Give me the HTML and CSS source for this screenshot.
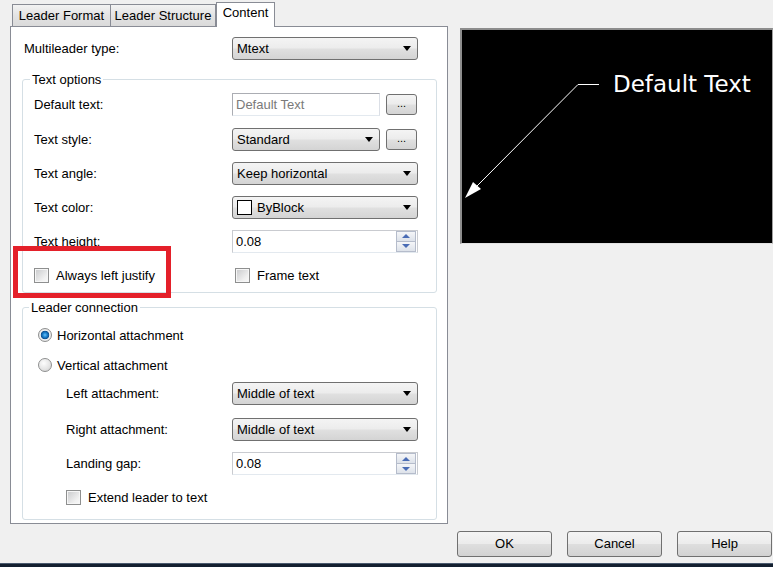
FILE: index.html
```html
<!DOCTYPE html>
<html>
<head>
<meta charset="utf-8">
<title>Multileader Style - Content</title>
<link rel="stylesheet" href="styles.css">
</head>
<body>
<div class="main">
  <div class="left">
    <div class="tabs">
      <div class="tab t1">Leader Format</div>
      <div class="tab t2">Leader Structure</div>
      <div class="tab active">Content</div>
    </div>
    <div class="panel">
      <div class="row row-top">
        <span class="lbl">Multileader type:</span>
        <div class="combo w-full"><span>Mtext</span><i class="arrow"></i></div>
      </div>

      <fieldset class="group g1">
        <legend>Text options</legend>
        <div class="row row-opt first">
          <span class="lbl">Default text:</span>
          <div class="pair">
            <div class="textbox w-short disabled">Default Text</div>
            <div class="dots">...</div>
          </div>
        </div>
        <div class="row row-opt">
          <span class="lbl">Text style:</span>
          <div class="pair">
            <div class="combo w-short"><span>Standard</span><i class="arrow"></i></div>
            <div class="dots">...</div>
          </div>
        </div>
        <div class="row row-opt">
          <span class="lbl">Text angle:</span>
          <div class="combo w-full"><span>Keep horizontal</span><i class="arrow"></i></div>
        </div>
        <div class="row row-opt">
          <span class="lbl">Text color:</span>
          <div class="combo w-full color"><i class="swatch"></i><span>ByBlock</span><i class="arrow"></i></div>
        </div>
        <div class="row row-opt">
          <span class="lbl">Text height:</span>
          <div class="spin w-full">
            <span class="val">0.08</span>
            <div class="spinbtns"><div class="sb up"><i></i></div><div class="sb down"><i></i></div></div>
          </div>
        </div>
        <div class="row row-opt">
          <label class="check"><i class="cb"></i><span>Always left justify</span></label>
          <label class="check frame"><i class="cb"></i><span>Frame text</span></label>
        </div>
      </fieldset>

      <fieldset class="group g2">
        <legend>Leader connection</legend>
        <div class="row-radio r1">
          <label class="radio"><i class="rb on"></i><span>Horizontal attachment</span></label>
        </div>
        <div class="row-radio r2">
          <label class="radio"><i class="rb"></i><span>Vertical attachment</span></label>
        </div>
        <div class="row row-sub r3">
          <span class="lbl">Left attachment:</span>
          <div class="combo w-full"><span>Middle of text</span><i class="arrow"></i></div>
        </div>
        <div class="row row-sub r4">
          <span class="lbl">Right attachment:</span>
          <div class="combo w-full"><span>Middle of text</span><i class="arrow"></i></div>
        </div>
        <div class="row row-sub r5">
          <span class="lbl">Landing gap:</span>
          <div class="spin w-full">
            <span class="val">0.08</span>
            <div class="spinbtns"><div class="sb up"><i></i></div><div class="sb down"><i></i></div></div>
          </div>
        </div>
        <div class="row-ext">
          <label class="check"><i class="cb"></i><span>Extend leader to text</span></label>
        </div>
      </fieldset>

      <div class="highlight"></div>
    </div>
  </div>

  <div class="preview">
    <svg width="311" height="214" viewBox="0 0 311 214">
      <line x1="137" y1="54.5" x2="116" y2="54.5" stroke="#fff" stroke-width="1"/>
      <line x1="116" y1="54.5" x2="15" y2="156" stroke="#fff" stroke-width="1"/>
      <polygon points="3,168 11,152 19,159" fill="#fff"/>
      <text x="151" y="62" class="pvtext">Default Text</text>
    </svg>
  </div>
</div>

<div class="buttons">
  <div class="btn">OK</div>
  <div class="btn">Cancel</div>
  <div class="btn">Help</div>
</div>
<div class="taskbar"></div>
</body>
</html>
```

FILE: styles.css
```css
html, body {
  margin: 0;
  padding: 0;
}
body {
  background: #f0f0f0;
  font-family: "Liberation Sans", Arial, sans-serif;
  font-size: 13px;
  color: #000;
  width: 773px;
  height: 567px;
  overflow: hidden;
}
.main {
  display: flex;
  align-items: flex-start;
}
.left {
  margin-left: 10px;
  width: 438px;
}
.tabs {
  height: 26px;
  display: flex;
  align-items: flex-end;
  padding-left: 2px;
}
.tab {
  box-sizing: border-box;
  height: 22px;
  border: 1px solid #898c95;
  border-bottom: none;
  background: linear-gradient(#f3f3f3, #e3e3e3 50%, #dadada);
  text-align: center;
  line-height: 15px;
  padding-top: 3px;
  white-space: nowrap;
}
.t1 { width: 99px; }
.t2 { border-left: none; width: 105px; }
.tab.active {
  width: 59px;
  height: 25px;
  margin-bottom: -1px;
  background: #fff;
  position: relative;
  z-index: 1;
  padding-top: 2px;
}
.panel {
  position: relative;
  box-sizing: border-box;
  height: 498px;
  background: #fff;
  border: 1px solid #898c95;
  padding: 4px 10px 0 11px;
}
.row {
  display: grid;
  align-items: center;
}
.row-top {
  height: 35px;
  padding-left: 2px;
  grid-template-columns: 208px 186px;
}
.group {
  margin: 0;
  padding: 0 10px 0 11px;
  border: 1px solid #d5dfe5;
  border-radius: 3px;
}
.group legend {
  padding: 0 2px;
  margin-left: -4px;
  line-height: 15px;
  font-size: 13px;
}
.g1 { margin-top: 6px; }
.g2 { margin-top: 7px; padding-top: 5px; padding-bottom: 9px; }
.g2 legend { margin-left: -5px; }
.row-opt {
  height: 34px;
  grid-template-columns: 198px 186px;
}
.row-opt.first { height: 35px; }
.row-sub {
  padding-left: 32px;
  grid-template-columns: 166px 186px;
}
.r3 { height: 26px; }
.r4 { height: 46px; }
.r5 { height: 23px; }
.row-radio {
  height: 30px;
  display: flex;
  align-items: center;
  padding-left: 4px;
}
.row-ext {
  margin-top: 9px;
  height: 26px;
  display: flex;
  align-items: center;
  padding-left: 32px;
}
.lbl { white-space: nowrap; }

.w-full { width: 186px; }
.w-short { width: 148px; }

.combo {
  box-sizing: border-box;
  height: 23px;
  border: 1px solid #707070;
  border-radius: 3px;
  background: linear-gradient(#f4f4f4, #ececec 48%, #e0e0e0 52%, #d4d4d4);
  display: flex;
  align-items: center;
  padding-left: 4px;
  white-space: nowrap;
}
.combo .arrow {
  margin-left: auto;
  margin-right: 6px;
  width: 0;
  height: 0;
  border-left: 4.5px solid transparent;
  border-right: 4.5px solid transparent;
  border-top: 5px solid #000;
}
.combo.color .swatch {
  width: 13px;
  height: 13px;
  border: 1px solid #000;
  background: #fff;
  margin-right: 5px;
}
.pair {
  display: flex;
  align-items: center;
  gap: 6px;
  width: 186px;
}
.textbox {
  box-sizing: border-box;
  height: 23px;
  border: 1px solid #abadb3;
  border-bottom-color: #e3e9ef;
  border-right-color: #dbdfe6;
  background: #fff;
  padding-left: 3px;
  line-height: 21px;
}
.textbox.disabled { color: #7a7a7a; }
.dots {
  box-sizing: border-box;
  width: 31px;
  height: 21px;
  border: 1px solid #707070;
  border-radius: 3px;
  background: linear-gradient(#f4f4f4, #ececec 48%, #e0e0e0 52%, #d4d4d4);
  text-align: center;
  font-size: 11px;
  line-height: 17px;
}
.spin {
  box-sizing: border-box;
  height: 23px;
  border: 1px solid #c9cbd0;
  border-bottom-color: #e3e9ef;
  background: #fff;
  display: flex;
  align-items: stretch;
}
.spin .val {
  flex: 1;
  padding-left: 3px;
  line-height: 21px;
}
.spinbtns {
  width: 20px;
  display: flex;
  flex-direction: column;
  margin: 0 1px 0 0;
}
.sb {
  flex: 1;
  box-sizing: border-box;
  border: 1px solid #b5bccb;
  background: linear-gradient(#f5f6f8, #dde2ea);
  display: flex;
  align-items: center;
  justify-content: center;
}
.sb.down { border-top: none; }
.sb i {
  width: 0;
  height: 0;
  border-left: 4px solid transparent;
  border-right: 4px solid transparent;
}
.sb.up i { border-bottom: 4px solid #4a6cb5; }
.sb.down i { border-top: 4px solid #4a6cb5; }

.check, .radio {
  display: flex;
  align-items: center;
  white-space: nowrap;
}
.cb {
  box-sizing: border-box;
  width: 15px;
  height: 15px;
  border: 1px solid #8e8f8f;
  background: linear-gradient(135deg, #c8c9cb, #f0f0f0 70%, #fafafa);
  box-shadow: inset 0 0 0 1px #f6f6f6;
  margin-right: 7px;
}
.frame { margin-left: 3px; }
.rb {
  box-sizing: border-box;
  width: 14px;
  height: 14px;
  border-radius: 50%;
  border: 1px solid #8e8f8f;
  background: radial-gradient(circle at 40% 35%, #fdfdfd, #e3e3e3 60%, #c8c8c8);
  margin-right: 5px;
}
.rb.on {
  background: radial-gradient(circle at 50% 50%, #6fc0f5 0, #1d88d6 2px, #0e4f8f 4px, #f4f4f4 4.6px, #e4e4e4 6px);
}
.highlight {
  position: absolute;
  left: 2px;
  top: 219px;
  width: 158px;
  height: 52px;
  box-sizing: border-box;
  border: 5px solid #e4202a;
}

.preview {
  margin-left: 12px;
  margin-top: 28px;
  width: 313px;
  height: 216px;
  box-sizing: border-box;
  background: #000;
  border-top: 2px solid #8d8d8d;
  border-left: 2px solid #8d8d8d;
  border-bottom: 1px solid #e2e2e2;
  border-right: 1px solid #a0a0a0;
}
.preview svg { display: block; }
.pvtext {
  fill: #fff;
  font-family: "DejaVu Sans", sans-serif;
  font-size: 23px;
}

.buttons {
  display: flex;
  justify-content: flex-end;
  gap: 15px;
  margin-top: 7px;
  padding-right: 1px;
}
.btn {
  box-sizing: border-box;
  width: 95px;
  height: 26px;
  border: 1px solid #707070;
  border-radius: 3px;
  background: linear-gradient(#f4f4f4, #ececec 48%, #dedede 52%, #d2d2d2);
  text-align: center;
  line-height: 24px;
}
.taskbar {
  margin-top: 6px;
  height: 4px;
  box-sizing: border-box;
  border-top: 1px solid #4b5a6e;
  background: #142030;
}
```
